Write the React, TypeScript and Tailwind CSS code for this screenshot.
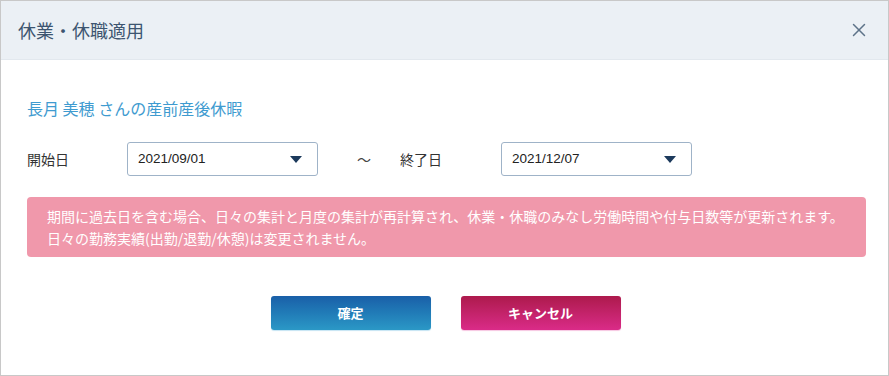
import { X } from 'lucide-react'

const font = { fontFamily: '"Noto Sans CJK JP", "Liberation Sans", sans-serif' }

function DateSelect({ value }: { value: string }) {
  return (
    <div className="w-[191px] h-[34px] flex items-center justify-between pl-[10px] pr-[15px] border border-[#9fb3c8] rounded-[3px] bg-white">
      <span className="text-[13.5px] text-[#222]" style={{ fontFamily: '"Liberation Sans", Arial, sans-serif' }}>{value}</span>
      <svg width="12" height="7" viewBox="0 0 12 7">
        <path d="M0 0 L12 0 L6 7 Z" fill="#1c3a5c" />
      </svg>
    </div>
  )
}

export default function App() {
  return (
    <div className="w-[889px] h-[376px] border border-[#c8c8c8] bg-white flex flex-col" style={font}>
      {/* header */}
      <div className="h-[59px] bg-[#ebf0f5] border-b border-[#e2e8ee] flex items-center justify-between pl-[17px] pr-[18px] shrink-0">
        <h1 className="text-[18px] text-[#3d5570]">休業・休職適用</h1>
        <X className="w-[22px] h-[22px] text-[#5d7389]" strokeWidth={1.6} />
      </div>

      <div className="pl-[26px] pr-[22px] pt-[34px]">
        <p className="text-[16px] text-[#3f9bd0] leading-[28px]">長月 美穂 さんの産前産後休暇</p>

        <div className="flex items-center mt-[20px]">
          <span className="w-[100px] text-[14px] text-[#333]">開始日</span>
          <DateSelect value="2021/09/01" />
          <span className="ml-[39px] w-[43px] text-[14px] text-[#444]">〜</span>
          <span className="w-[101px] text-[14px] text-[#333]">終了日</span>
          <DateSelect value="2021/12/07" />
        </div>

        <div className="mt-[21px] h-[60px] rounded-[4px] bg-[#f098ab] px-[20px] flex flex-col justify-center text-[14px] leading-[22px] text-white whitespace-nowrap">
          <p>期間に過去日を含む場合、日々の集計と月度の集計が再計算され、休業・休職のみなし労働時間や付与日数等が更新されます。</p>
          <p>日々の勤務実績(出勤/退勤/休憩)は変更されません。</p>
        </div>

        <div className="flex justify-center gap-[30px] mt-[39px] pr-[2px]">
          <button className="w-[160px] h-[34px] rounded-[3px] bg-gradient-to-b from-[#1a5fa8] to-[#2b98c6] text-white text-[13px] font-bold shadow-[0_1px_1px_#c5e4f3]">
            確定
          </button>
          <button className="w-[160px] h-[34px] rounded-[3px] bg-gradient-to-b from-[#ad1a4c] to-[#da2b88] text-white text-[13px] font-bold shadow-[0_1px_1px_#f7c6e1]">
            キャンセル
          </button>
        </div>
      </div>
    </div>
  )
}
